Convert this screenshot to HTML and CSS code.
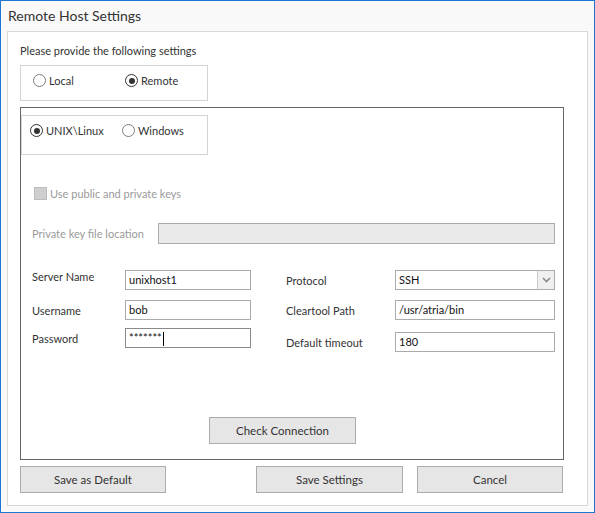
FILE: index.html
```html
<!DOCTYPE html>
<html lang="en">
<head>
    <meta charset="UTF-8">
    <title>Remote Host Settings</title>
    <link rel="stylesheet" href="styles.css">
</head>
<body>
    <div class="window">
        <div class="title">Remote Host Settings</div>
        <div class="panel">
            <p class="intro">Please provide the following settings</p>

            <div class="group host-type">
                <label class="radio"><span class="circle"></span>Local</label>
                <label class="radio checked"><span class="circle"></span>Remote</label>
            </div>

            <div class="remote-box">
                <div class="group os-type">
                    <label class="radio checked"><span class="circle"></span>UNIX\Linux</label>
                    <label class="radio"><span class="circle"></span>Windows</label>
                </div>

                <label class="check-row disabled"><span class="box"></span>Use public and private keys</label>

                <div class="key-row">
                    <span class="label disabled">Private key file location</span>
                    <div class="input key-input"></div>
                </div>

                <div class="fields">
                    <div class="col left">
                        <div class="row top">
                            <span class="label">Server Name</span>
                            <div class="input">unixhost1</div>
                        </div>
                        <div class="row">
                            <span class="label">Username</span>
                            <div class="input">bob</div>
                        </div>
                        <div class="row tight">
                            <span class="label">Password</span>
                            <div class="input focused">*******<span class="caret"></span></div>
                        </div>
                    </div>
                    <div class="col right">
                        <div class="row">
                            <span class="label">Protocol</span>
                            <div class="input select">
                                <span class="value">SSH</span>
                                <span class="arrow">
                                    <svg width="9" height="6" viewBox="0 0 9 6"><polyline points="1,1 4.5,4.5 8,1" fill="none" stroke="#8a8a8a" stroke-width="1.6"/></svg>
                                </span>
                            </div>
                        </div>
                        <div class="row">
                            <span class="label">Cleartool Path</span>
                            <div class="input">/usr/atria/bin</div>
                        </div>
                        <div class="row loose">
                            <span class="label">Default timeout</span>
                            <div class="input">180</div>
                        </div>
                    </div>
                </div>

                <button class="button check-btn">Check Connection</button>
            </div>

            <div class="actions">
                <button class="button">Save as Default</button>
                <button class="button save-btn">Save Settings</button>
                <button class="button cancel-btn">Cancel</button>
            </div>
        </div>
    </div>
</body>
</html>
```

FILE: styles.css
```css
* {
    box-sizing: border-box;
}
body {
    margin: 0;
    font-family: 'Lato', 'Liberation Sans', sans-serif;
    font-size: 11px;
    color: #333;
}
.window {
    width: 595px;
    height: 513px;
    border: 1px solid #1a78d2;
    background: #f9f9f9;
}
.title {
    height: 30px;
    line-height: 30px;
    padding-left: 7px;
    font-size: 14px;
    color: #333;
}
.panel {
    margin: 0 6px;
    height: 475px;
    border: 1px solid #d8d8d8;
    background: #fff;
    padding: 0 12px;
}
.intro {
    margin: 11px 0 0;
    line-height: 15px;
}
.group {
    display: flex;
    border: 1px solid #d4d4d4;
}
.host-type {
    margin-top: 7px;
    width: 188px;
    height: 36px;
    padding: 8px 0 0 12px;
}
.os-type {
    margin-top: 7px;
    width: 187px;
    height: 40px;
    padding: 8px 0 0 8px;
}
.radio {
    flex: none;
    width: 92px;
    height: 13px;
    display: flex;
    align-items: center;
    gap: 3px;
    line-height: 13px;
}
.os-type .radio:last-child,
.host-type .radio:last-child {
    width: auto;
}
.circle {
    width: 13px;
    height: 13px;
    border-radius: 50%;
    border: 1px solid #7c7c7c;
    background: #fff;
    flex: none;
    position: relative;
}
.radio.checked .circle {
    border-color: #333;
}
.radio.checked .circle::after {
    content: '';
    position: absolute;
    left: 2.5px;
    top: 2.5px;
    width: 6px;
    height: 6px;
    border-radius: 50%;
    background: #333;
}
.remote-box {
    margin-top: 6px;
    width: 544px;
    height: 353px;
    border: 1px solid #666;
}
.check-row {
    display: flex;
    align-items: center;
    gap: 3px;
    margin: 32px 0 0 13px;
    height: 13px;
}
.box {
    width: 13px;
    height: 13px;
    background: #cfcfcf;
    border: 1px solid #bdbdbd;
}
.disabled {
    color: #9a9a9a;
}
.key-row {
    display: flex;
    align-items: center;
    margin-top: 23px;
    padding-left: 11px;
}
.key-row .label {
    width: 126px;
}
.input {
    height: 20px;
    border: 1px solid #ababab;
    background: #fff;
    color: #111;
    padding: 0 3px;
    line-height: 18px;
    white-space: nowrap;
}
.key-input {
    width: 397px;
    height: 21px;
    background: #eaeaea;
}
.fields {
    display: flex;
    margin-top: 26px;
    padding-left: 11px;
    gap: 35px;
}
.col {
    display: flex;
    flex-direction: column;
    gap: 10px;
}
.row {
    display: flex;
    align-items: center;
}
.row.tight {
    margin-top: -2px;
}
.row.loose {
    margin-top: 2px;
}
.row.top .label {
    align-self: flex-start;
    line-height: 14px;
}
.left .label {
    width: 93px;
}
.left .input {
    width: 126px;
}
.right .label {
    width: 109px;
}
.right .input {
    width: 160px;
}
.focused {
    border-color: #8a8a8a;
}
.caret {
    display: inline-block;
    width: 1px;
    height: 14px;
    background: #000;
    vertical-align: middle;
    margin-left: 1px;
}
.select {
    display: flex;
    padding-right: 0;
}
.select .value {
    flex: 1;
}
.select .arrow {
    width: 17px;
    background: #f0f0f0;
    border-left: 1px solid #cacaca;
    display: flex;
    align-items: center;
    justify-content: center;
}
.button {
    height: 27px;
    border: 1px solid #acacac;
    background: #e6e6e6;
    font-family: inherit;
    font-size: 11.5px;
    color: #333;
    padding: 0;
}
.check-btn {
    display: block;
    margin: 65px 0 0 188px;
    width: 147px;
}
.actions {
    display: flex;
    margin-top: 6px;
}
.actions .button {
    width: 146px;
}
.actions .save-btn {
    width: 147px;
    margin-left: 90px;
}
.actions .cancel-btn {
    margin-left: 14px;
}
```
